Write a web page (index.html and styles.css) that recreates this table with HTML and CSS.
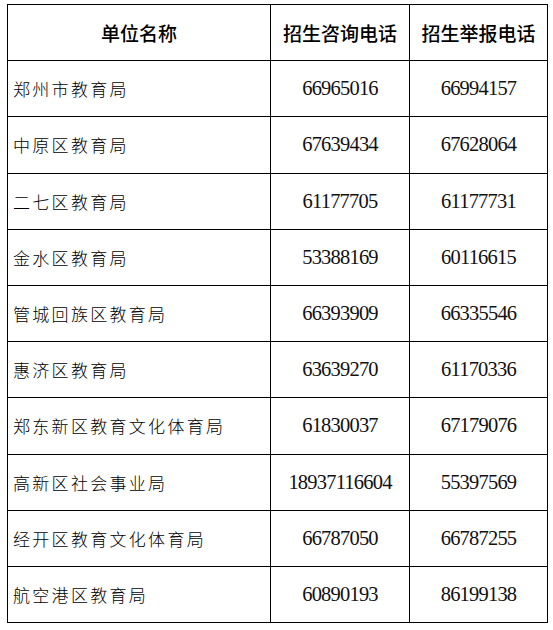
FILE: index.html
```html
<!DOCTYPE html>
<html lang="zh">
<head>
<meta charset="utf-8">
<title>招生咨询电话</title>
<link rel="stylesheet" href="styles.css">
</head>
<body>
<table class="tbl">
  <colgroup>
    <col class="c1"><col class="c2"><col class="c3">
  </colgroup>
  <thead>
    <tr><th>单位名称</th><th>招生咨询电话</th><th>招生举报电话</th></tr>
  </thead>
  <tbody>
    <tr><td class="name">郑州市教育局</td><td class="num">66965016</td><td class="num">66994157</td></tr>
    <tr><td class="name">中原区教育局</td><td class="num">67639434</td><td class="num">67628064</td></tr>
    <tr><td class="name">二七区教育局</td><td class="num">61177705</td><td class="num">61177731</td></tr>
    <tr><td class="name">金水区教育局</td><td class="num">53388169</td><td class="num">60116615</td></tr>
    <tr><td class="name">管城回族区教育局</td><td class="num">66393909</td><td class="num">66335546</td></tr>
    <tr><td class="name">惠济区教育局</td><td class="num">63639270</td><td class="num">61170336</td></tr>
    <tr><td class="name">郑东新区教育文化体育局</td><td class="num">61830037</td><td class="num">67179076</td></tr>
    <tr><td class="name">高新区社会事业局</td><td class="num">18937116604</td><td class="num">55397569</td></tr>
    <tr><td class="name">经开区教育文化体育局</td><td class="num">66787050</td><td class="num">66787255</td></tr>
    <tr><td class="name">航空港区教育局</td><td class="num">60890193</td><td class="num">86199138</td></tr>
  </tbody>
</table>
</body>
</html>
```
FILE: styles.css
```css
html, body {
  margin: 0;
  padding: 0;
  background: #ffffff;
}
body {
  padding: 4px 0 0 7px;
}
.tbl {
  border-collapse: collapse;
  table-layout: fixed;
  width: 540px;
  color: #000;
}
.c1 { width: 263px; }
.c2 { width: 139px; }
.c3 { width: 138px; }
.tbl th, .tbl td {
  border: 1px solid #000;
  height: 55.2px;
  padding: 0;
  vertical-align: middle;
}
.tbl th {
  font-family: "Noto Sans CJK SC", sans-serif;
  font-weight: 500;
  font-size: 19px;
  text-align: center;
}
.name {
  font-family: "Noto Sans CJK SC", sans-serif;
  font-weight: 300;
  font-size: 17px;
  letter-spacing: 2.3px;
  padding-left: 5px !important;
  text-align: left;
}
.num {
  font-family: "Liberation Serif", serif;
  font-size: 20.5px;
  letter-spacing: -0.8px;
  color: #111;
  text-align: center;
}
```
